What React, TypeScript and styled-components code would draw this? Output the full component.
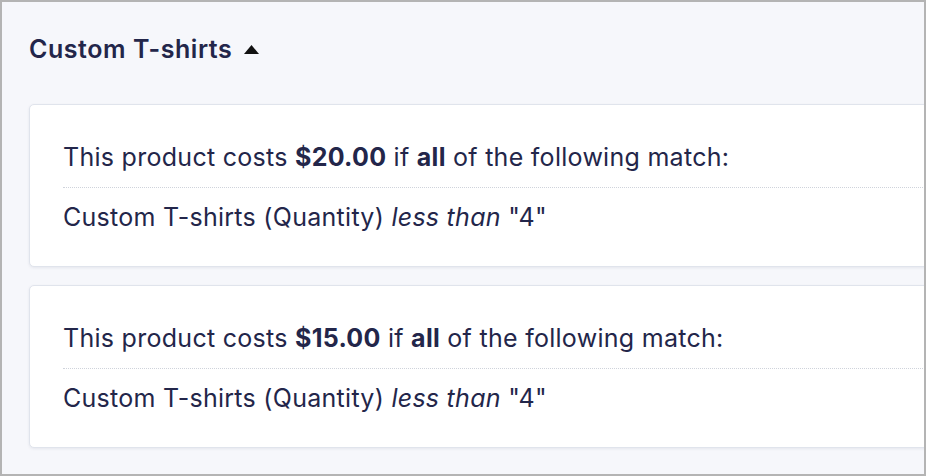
import React from "react";
import styled, { createGlobalStyle } from "styled-components";

const GlobalStyle = createGlobalStyle`
  html, body {
    margin: 0;
    padding: 0;
  }
  body {
    font-family: Inter, "Noto Sans", sans-serif;
    color: #23264a;
  }
`;

const Frame = styled.div`
  box-sizing: border-box;
  width: 926px;
  height: 476px;
  border: 2px solid #b4b4b4;
  background: #f6f7fb;
  overflow: hidden;
  padding: 32px 0 0 27px;
`;

const SectionHeader = styled.button`
  display: flex;
  align-items: center;
  gap: 12px;
  height: 30px;
  padding: 0;
  border: none;
  background: none;
  font-family: inherit;
  font-size: 25px;
  font-weight: 600;
  letter-spacing: 0.55px;
  color: #23264a;
  cursor: pointer;
`;

const CardList = styled.div`
  display: flex;
  flex-direction: column;
  gap: 18px;
  width: 940px;
  margin-top: 40px;
`;

const RuleCard = styled.div`
  background: #ffffff;
  border: 1px solid #e0e4ec;
  border-radius: 5px;
  box-shadow: 0 1px 3px rgba(30, 40, 80, 0.08);
  padding: 37px 33px 34px;
`;

const RuleLine = styled.p<{ $divided?: boolean }>`
  margin: 0;
  font-size: 25px;
  line-height: 30px;
  letter-spacing: 0.28px;
  padding: ${(p) => (p.$divided ? "14px 0 0" : "0 0 15px")};
  border-bottom: ${(p) => (p.$divided ? "none" : "1px dotted #cfd3db")};
`;

const rules = [
  { price: "$20.00", qty: "4" },
  { price: "$15.00", qty: "4" },
];

const Caret = () => (
  <svg width="15" height="9" viewBox="0 0 15 9">
    <path d="M7.5 0 L15 9 L0 9 Z" fill="#111" />
  </svg>
);

export default function App() {
  return (
    <>
      <GlobalStyle />
      <Frame>
        <SectionHeader>
          Custom T-shirts
          <Caret />
        </SectionHeader>
        <CardList>
          {rules.map((r) => (
            <RuleCard key={r.price}>
              <RuleLine>
                This product costs <b>{r.price}</b> if <b>all</b> of the
                following match:
              </RuleLine>
              <RuleLine $divided>
                Custom T-shirts (Quantity) <i>less than</i> "{r.qty}"
              </RuleLine>
            </RuleCard>
          ))}
        </CardList>
      </Frame>
    </>
  );
}
